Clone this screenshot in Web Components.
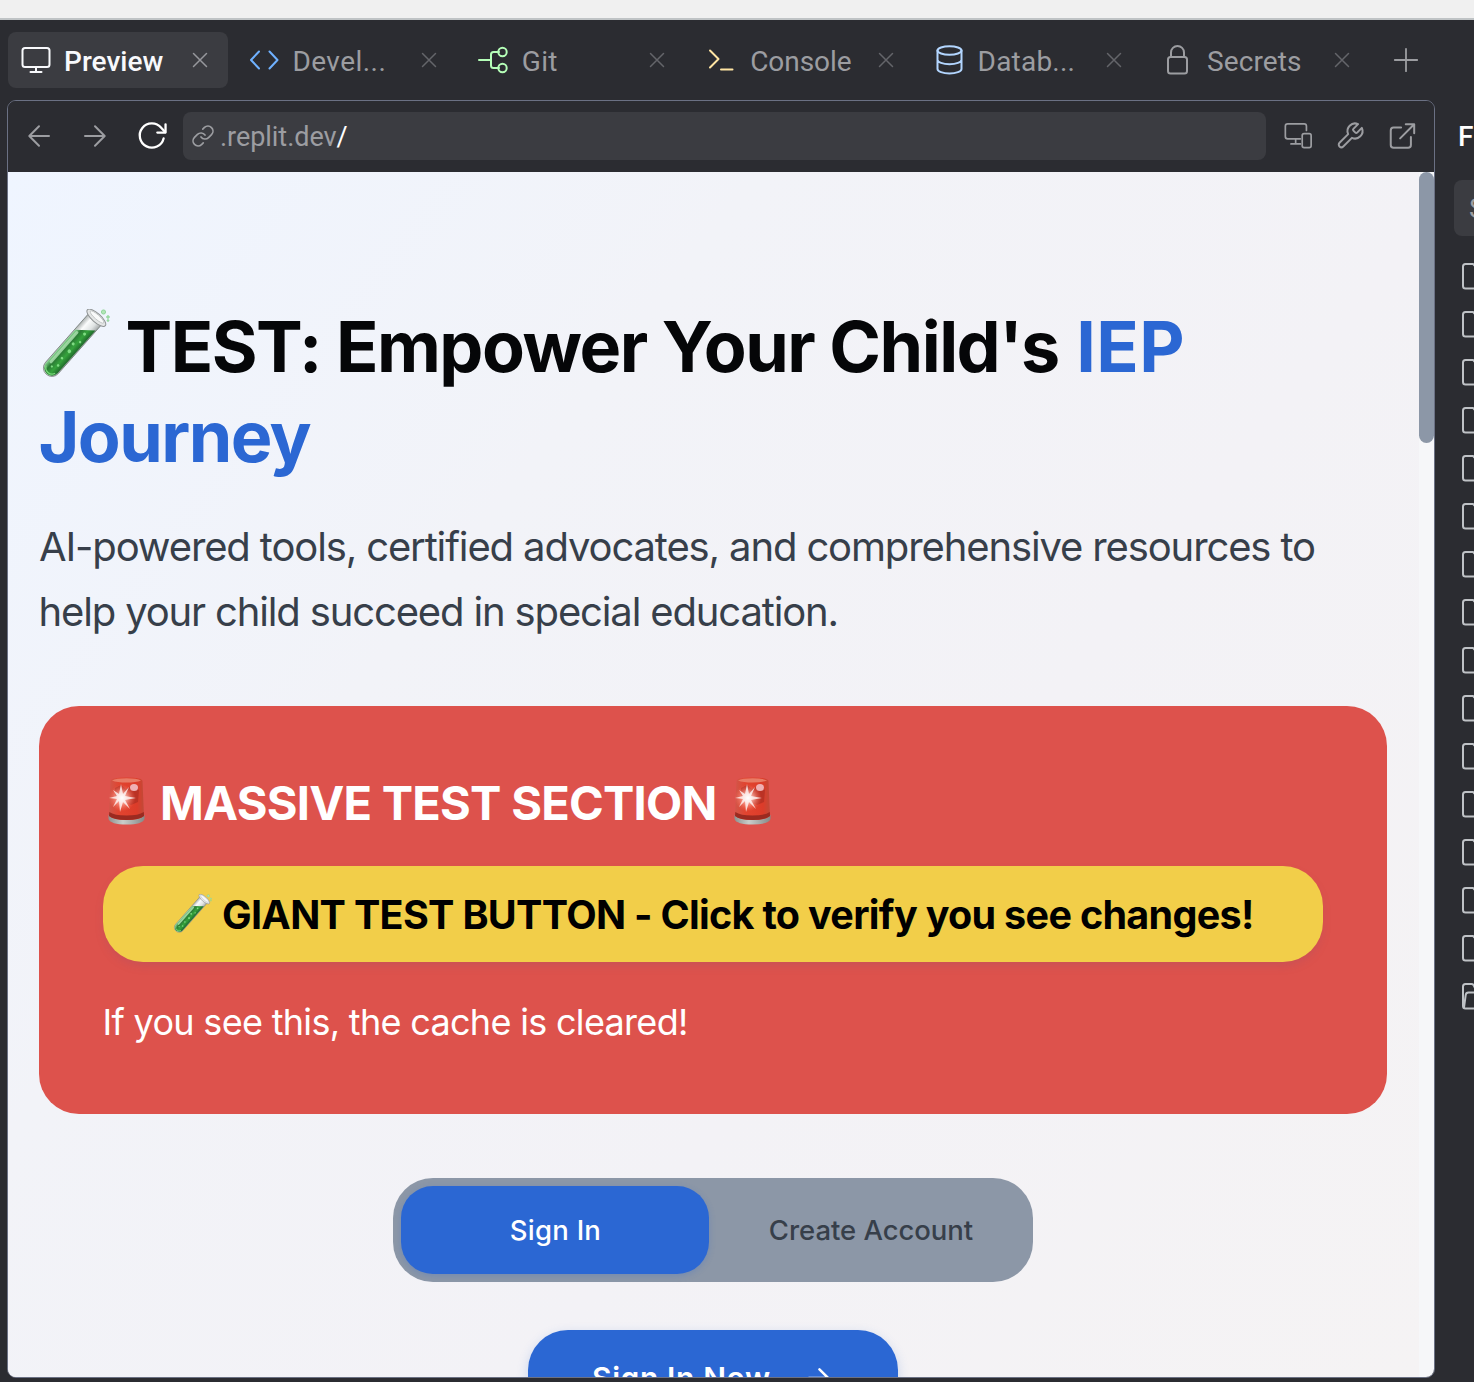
<!DOCTYPE html>
<html lang="en">
<head>
<meta charset="utf-8">
<title>Preview</title>
<style>
html,body{margin:0;width:1474px;height:1382px;overflow:hidden;background:#2b2c31;font-family:Inter,"Liberation Sans",sans-serif}
</style>
</head>
<body>
<ide-window></ide-window>
<script>
const define = (name, html, setup) => {
  const t = document.createElement('template');
  t.innerHTML = html;
  customElements.define(name, class extends HTMLElement {
    connectedCallback() {
      if (this.shadowRoot) return;
      this.attachShadow({ mode: 'open' }).append(t.content.cloneNode(true));
      if (setup) setup(this, this.shadowRoot);
    }
  });
};

/* Tracks its text so that the visible glyphs span the "w" attribute in pixels. */
define('fit-text', `<style>:host{display:inline-block;white-space:pre}</style><slot></slot>`, host => {
  const ctx = document.createElement('canvas').getContext('2d');
  const cs = getComputedStyle(host);
  ctx.font = `${cs.fontWeight} ${cs.fontSize} ${cs.fontFamily}`;
  const text = host.textContent, m = ctx.measureText(text);
  const ink = m.actualBoundingBoxLeft + m.actualBoundingBoxRight;
  const gap = (+host.getAttribute('w') - ink) / Math.max(1, text.length - 1);
  host.style.letterSpacing = gap.toFixed(3) + 'px';
  host.style.marginLeft = m.actualBoundingBoxLeft.toFixed(2) + 'px';
});

const ICONS = {
  monitor: ['0 0 32 32', '<rect x="2.500" y="4" width="27" height="19" rx="2.500"/><path d="M16 23.500v4M10.500 28h11"/>'],
  code: ['0 0 32 32', '<path d="M11 7.500L3 16l8 8.500M21.500 7.500l8 8.500-8 8.500"/>'],
  git: ['0 0 32 32', '<path d="M2 16H14M22 8h-5.500Q14 8 14 10.500v11Q14 24 16.500 24H22"/><circle cx="25.500" cy="8" r="4.200"/><circle cx="25.500" cy="24" r="4.200"/>'],
  console: ['0 0 32 32', '<path d="M5 6.500l8.500 8.500L5 23.500M16 25.500h11.500"/>'],
  database: ['0 0 32 32', '<ellipse cx="15.500" cy="6.500" rx="12" ry="4.200"/><path d="M3.500 6.500v18.500c0 2.500 5.400 4.500 12 4.500s12-2 12-4.500V6.500M3.500 15.700c0 2.500 5.400 4.500 12 4.500s12-2 12-4.500"/>'],
  lock: ['0 0 32 32', '<rect x="6" y="13" width="19" height="16.500" rx="2.500"/><path d="M9 13V8.500a6.500 6.500 0 0 1 13 0V13"/>'],
  close: ['0 0 16 16', '<path d="M1.500 1.500l13 13M14.500 1.500l-13 13"/>'],
  plus: ['0 0 24 24', '<path d="M12 .8v22.400M.8 12h22.400"/>'],
  back: ['0 0 24 24', '<path d="M22 12H2.500M12 2.300L2.300 12l9.700 9.700"/>'],
  forward: ['0 0 24 24', '<path d="M2 12h19.500M12 2.300l9.700 9.700-9.700 9.700"/>'],
  reload: ['0 0 32 32', '<path d="M28.500 19A12.500 12.500 0 1 1 26 8l4 4.500"/><path d="M30.500 4.500v8.500H22"/>'],
  link: ['0 0 24 24', '<path d="M10 13a5 5 0 0 0 7.540.54l3-3a5 5 0 0 0-7.070-7.070l-1.720 1.710"/><path d="M14 11a5 5 0 0 0-7.540-.54l-3 3a5 5 0 0 0 7.070 7.070l1.710-1.710"/>'],
  devices: ['0 0 32 32', '<path d="M25 10V5.500Q25 3 22.500 3H5Q2.500 3 2.500 5.500v11Q2.500 19 5 19h13.500M13.500 19v5M8.500 24.500h10"/><rect x="20.500" y="13.500" width="9.500" height="15" rx="2"/>'],
  wrench: ['0 0 24 24', '<path d="M14.700 6.300a1 1 0 0 0 0 1.400l1.600 1.600a1 1 0 0 0 1.400 0l3.770-3.770a6 6 0 0 1-7.940 7.940l-6.910 6.910a2.120 2.120 0 0 1-3-3l6.910-6.910a6 6 0 0 1 7.940-7.940l-3.760 3.760z"/>'],
  external: ['0 0 32 32', '<path d="M15 7H7Q4 7 4 10v15.500q0 3 3 3h15.500q3 0 3-3V17M20 3.500h9V13M29 3.500L14 18.500"/>'],
  file: ['0 0 32 32', '<path d="M17 4H9.500Q7 4 7 6.500v19.500Q7 28.500 9.500 28.500h15Q27 28.500 27 26V14z"/>'],
  folder: ['0 0 32 32', '<path d="M29 12V10H20l-2.500-5Q17 4 15.500 4H9.500Q7 4 7 6.500v19.500Q7 28.500 9.500 28.500H27l4-16H12.500Q10 12.500 9.700 15L8 27.500"/>'],
  arrow: ['0 0 24 24', '<path d="M1 12h21M12.500 2.500L22 12l-9.500 9.500"/>']
};
define('ui-icon', `<style>:host{display:inline-flex;flex:none}svg{display:block;width:100%;height:100%;fill:none;stroke:currentColor;stroke-linecap:round;stroke-linejoin:round;overflow:visible}</style><svg></svg>`, (host, root) => {
  const [box, body] = ICONS[host.getAttribute('name')];
  const size = +host.getAttribute('size');
  const svg = root.querySelector('svg');
  host.style.width = host.style.height = size + 'px';
  svg.setAttribute('viewBox', box);
  svg.setAttribute('stroke-width', (+host.getAttribute('sw') || 2) * +box.split(' ')[2] / size);
  svg.innerHTML = body;
});

define('test-tube', `<style>:host{display:inline-block;flex:none}svg{display:block;width:100%;height:100%}</style>
<svg viewBox="2 1 69 72">
<defs><linearGradient id="g" x1="0" x2="1"><stop offset="0" stop-color="#8bd894"/><stop offset=".3" stop-color="#2b7a35"/><stop offset=".65" stop-color="#35a33c"/><stop offset="1" stop-color="#1f6a2b"/></linearGradient>
<linearGradient id="w" x1="0" x2="1"><stop offset="0" stop-color="#aeb3b2"/><stop offset=".3" stop-color="#fbfcfc"/><stop offset=".7" stop-color="#dfe3e3"/><stop offset="1" stop-color="#a5a9aa"/></linearGradient></defs>
<g transform="translate(58 9) rotate(41.500)">
<path d="M-8.500 2V68a8.500 8.500 0 0 0 17 0V2z" fill="url(#w)" stroke="#777e7b" stroke-width=".8"/>
<path d="M-7.800 24L7.800 11V68a7.800 7.800 0 0 1-15.600 0z" fill="url(#g)"/>
<path d="M-4.700 25V64" stroke="#b9ecbb" stroke-width="3" stroke-linecap="round" opacity=".7"/>
<path d="M-6 70a6.500 6.500 0 0 0 12 0" stroke="#78d67a" stroke-width="1.400" fill="none"/>
<ellipse cx="0" cy="1" rx="12" ry="4.400" fill="#e4e6e6" stroke="#8f9394" stroke-width="1"/>
<ellipse cx="0" cy="0" rx="9" ry="2.300" fill="#f9fafa" stroke="#b4b8b8" stroke-width=".7"/>
<g fill="#7edb82"><circle cx="2" cy="21" r="1.500"/><circle cx="4" cy="30" r="1.200"/><circle cx="0" cy="36" r="1.500"/><circle cx="2" cy="44" r="1.800"/><circle cx="1" cy="54" r="1.300"/><circle cx="3" cy="62" r="1.300"/><circle cx="-1" cy="67" r="1.100"/></g>
</g>
<g fill="#b2e6b7" stroke="#83cf8c" stroke-width=".8"><circle cx="64.500" cy="4" r="2.100"/><circle cx="69" cy="9" r="1.300"/><circle cx="69" cy="12.500" r=".9"/></g>
</svg>`);

define('siren-light', `<style>:host{display:inline-block;flex:none;width:37px;height:48px}svg{display:block}</style>
<svg width="37" height="48" viewBox="0 0 37 48">
<defs><linearGradient id="r" x1="0" x2="1"><stop offset="0" stop-color="#d0564a"/><stop offset=".3" stop-color="#e2442f"/><stop offset=".8" stop-color="#dc3c2a"/><stop offset="1" stop-color="#c04a38"/></linearGradient>
<linearGradient id="b" x1="0" x2="1"><stop offset="0" stop-color="#8d9290"/><stop offset=".4" stop-color="#c9cdca"/><stop offset="1" stop-color="#858a88"/></linearGradient>
<radialGradient id="h"><stop offset="0" stop-color="#fff"/><stop offset=".3" stop-color="#ffc5bb" stop-opacity=".85"/><stop offset="1" stop-color="#ff6a55" stop-opacity="0"/></radialGradient></defs>
<path d="M.5 38v4q2 5.500 18 5.500T36.500 42v-4z" fill="url(#b)"/>
<path d="M2.500 4Q3 .5 18.500.5T34.500 4L36 39q-4 4-17.500 4T1 39z" fill="url(#r)"/>
<path d="M1.300 35q5 3.500 17.200 3.500T35.800 35l.2 4Q31 43 18.500 43T1 39z" fill="#9b2a20"/>
<path d="M4 3.500Q8 1.200 18.500 1.200T33 3.500Q28 5.500 18.500 5.500T4 3.500z" fill="#e77c66"/>
<path d="M7 11l6-3 5 4 7-3 6 4-1 12-7 3-9-4-7-4z" fill="#a92c22" opacity=".65"/>
<ellipse cx="26" cy="10.500" rx="4" ry="3.600" fill="#efb0b3"/>
<circle cx="14" cy="21" r="13.500" fill="url(#h)"/>
<path d="M13 7l2 10 6-7-4 9 11 2-11 2 5 9-7-7-3 10-1-11-6 6 4-8-8-1 8-2-4-6 6 4z" fill="#fff" opacity=".75"/>
</svg>`);

define('pane-tab', `<style>
:host{display:flex;align-items:center;box-sizing:border-box;width:220.400px;height:56px;border-radius:8px;padding:0 20px 0 12px;color:#9c9da1;font:400 28px/56px Roboto,sans-serif}
:host([active]){background:#3b3c41;color:#f8f9fc;font-weight:500}
.label{flex:1;padding:2px 0 0 14px;height:56px;box-sizing:border-box;white-space:pre}
.x{display:flex;color:#64656a}
:host([active]) .x{color:#96979c}
.i{display:flex}
</style><span class="i"></span><span class="label"><slot></slot></span><span class="x"><ui-icon name="close" size="16" sw="1.500"></ui-icon></span>`, (host, root) => {
  const i = root.querySelector('.i');
  i.style.color = host.getAttribute('tint');
  i.innerHTML = `<ui-icon name="${host.getAttribute('icon')}" size="32" sw="2"></ui-icon>`;
});

define('tab-strip', `<style>:host{display:flex;gap:8px;padding:12px 0 0 8px;height:68px;align-items:center;box-sizing:border-box}.add{color:#9c9da1;display:flex;padding-left:16px}</style>
<pane-tab active icon="monitor" tint="#f8f9fc"><fit-text w="97.500">Preview</fit-text></pane-tab>
<pane-tab icon="code" tint="#6fb1ff"><fit-text w="90">Devel...</fit-text></pane-tab>
<pane-tab icon="git" tint="#b5ffb8"><fit-text w="34.500">Git</fit-text></pane-tab>
<pane-tab icon="console" tint="#ffe5a3"><fit-text w="99.500">Console</fit-text></pane-tab>
<pane-tab icon="database" tint="#b3d6ff"><fit-text w="94">Datab...</fit-text></pane-tab>
<pane-tab icon="lock" tint="#9c9da1"><fit-text w="93">Secrets</fit-text></pane-tab>
<span class="add"><ui-icon name="plus" size="24" sw="1.800"></ui-icon></span>`);

define('address-bar', `<style>
:host{display:flex;align-items:center;height:71px;color:#9c9da1;padding:0 0 2px 19px;box-sizing:border-box;background:#2b2c31}
.nav{display:flex;align-items:center;width:156px;flex:none}
.fwd{margin-left:32px}.re{margin-left:29px;color:#fff}
.url{display:flex;align-items:center;box-sizing:border-box;width:1083px;height:48px;border-radius:8px;background:#3b3c41;padding-left:8px;font:400 27px/48px Roboto,sans-serif}
.url fit-text{padding:2px 0 0 6px}.slash{color:#fff;padding-top:2px}
.tools{display:flex;align-items:center;padding-left:17px;gap:22px}
</style>
<div class="nav"><ui-icon name="back" size="24" sw="2"></ui-icon><ui-icon class="fwd" name="forward" size="24" sw="2"></ui-icon><ui-icon class="re" name="reload" size="31" sw="2.300"></ui-icon></div>
<div class="url"><ui-icon name="link" size="24" sw="1.700"></ui-icon><fit-text w="115.500">.replit.dev</fit-text><span class="slash">/</span></div>
<div class="tools"><ui-icon name="devices" size="30" sw="1.700"></ui-icon><ui-icon name="wrench" size="30" sw="2"></ui-icon><ui-icon name="external" size="30" sw="2"></ui-icon></div>`);

define('hero-title', `<style>:host{display:block;color:#050608;font:700 70px/90px Inter,sans-serif}div{display:flex;height:90px}test-tube{width:69px;height:72px;margin:7px 0 0 2px}.blue{color:#2b67d3}</style>
<div><test-tube></test-tube><fit-text w="930" style="padding-left:17.500px">TEST: Empower Your Child's</fit-text><fit-text class="blue" w="102" style="padding-left:21.500px">IEP</fit-text></div>
<div class="blue"><fit-text w="271" style="padding-left:1.500px">Journey</fit-text></div>`);

define('test-section', `<style>
:host{display:block;box-sizing:border-box;height:408px;border-radius:40px;background:#dd524c;padding:64px;color:#fff}
.head{display:flex;align-items:center;height:64px;padding-left:5px;font:700 47px/64px Inter,sans-serif}
.head siren-light{margin-top:-2px}
.head fit-text,.big fit-text{padding-top:2px}
.big{display:flex;align-items:center;box-sizing:border-box;margin-top:32px;height:96px;border-radius:40px;background:#f2ce49;color:#000;padding-left:70px;font:700 39.500px/94px Inter,sans-serif;box-shadow:0 5px 12px -4px rgba(120,80,130,.28)}
.big test-tube{width:39px;height:41px}
.note{margin-top:32px;font:440 36px/56px Inter,sans-serif}
</style>
<div class="head"><siren-light></siren-light><fit-text w="551.500" style="padding-left:18px">MASSIVE TEST SECTION</fit-text><siren-light style="margin-left:17px"></siren-light></div>
<div class="big"><test-tube></test-tube><fit-text w="1029" style="padding-left:11px">GIANT TEST BUTTON - Click to verify you see changes!</fit-text></div>
<div class="note"><fit-text w="580.500" style="padding-left:2.500px">If you see this, the cache is cleared!</fit-text></div>`);

define('auth-switch', `<style>
:host{display:flex;box-sizing:border-box;width:640px;height:104px;padding:8px;gap:8px;border-radius:40px;background:#8c97a7;font:500 27.500px/89px Inter,sans-serif}
div{flex:1;text-align:center;border-radius:32px;color:#373f4a}
.on{background:#2b67d3;color:#fff;box-shadow:0 2px 6px rgba(43,103,211,.25)}
</style><div class="on"><fit-text w="88.500" style="padding-left:2px">Sign In</fit-text></div><div><fit-text w="203" style="padding-left:1px">Create Account</fit-text></div>`);

define('cta-button', `<style>:host{display:flex;align-items:center;box-sizing:border-box;width:370px;height:96px;padding-left:65px;border-radius:40px;background:#2b67d3;color:#fff;font:600 30px/96px Inter,sans-serif;box-shadow:0 4px 12px rgba(43,103,211,.22)}ui-icon{margin-left:37px}</style><fit-text w="177">Sign In Now</fit-text><ui-icon name="arrow" size="22" sw="2.500"></ui-icon>`);

define('web-view', `<style>
:host{display:flex;height:1205px;overflow:hidden;background:#f6f7f9}
main{box-sizing:border-box;width:1411px;height:1205px;overflow:hidden;padding:130px 32px 0 31px;background:linear-gradient(128deg,#eff5ff 0%,#f2f3f8 32%,#f3f2f6 62%,#f5f3f4 100%);display:flex;flex-direction:column;flex:none}
p{margin:32px 0 62px;font:440 40px/65px Inter,sans-serif;color:#373f4a;height:130px}
p span{display:block;height:65px}
auth-switch{margin:64px auto 48px;flex:none}
cta-button{margin:0 auto;flex:none}
.thumb{width:15px;height:271px;border-radius:8px;background:#8c97a7}
</style>
<main><hero-title></hero-title>
<p><span><fit-text w="1274" style="padding-left:1px">AI-powered tools, certified advocates, and comprehensive resources to</fit-text></span><span><fit-text w="795" style="padding-left:2.500px">help your child succeed in special education.</fit-text></span></p>
<test-section></test-section><auth-switch></auth-switch><cta-button></cta-button></main><div class="thumb"></div>`);

define('file-panel', `<style>
:host{display:block;width:39px;overflow:hidden;color:#bfc2c6;white-space:nowrap}
.title{height:72px;padding-left:23px;color:#fff;font:500 28px/74px Roboto,sans-serif}
.search{margin:8px 0 0 19px;width:200px;height:56px;border-radius:8px;background:#3b3c41;padding-left:15px;box-sizing:border-box;color:#9c9da1;font:400 28px/58px Roboto,sans-serif}
.list{padding:16px 0 0 21px}
.row{height:48px;display:flex;align-items:center}
</style><div class="title">F</div><div class="search">S</div><div class="list"></div>`, (h, root) => {
  root.querySelector('.list').innerHTML = Array.from({ length: 16 }, (_, i) => `<div class="row"><ui-icon name="${i < 15 ? 'file' : 'folder'}" size="32" sw="2"></ui-icon></div>`).join('');
});

define('ide-window', `<style>
:host{display:block;width:1474px;height:1382px;overflow:hidden;background:#2b2c31}
.chrome{height:18px;background:#f0f0f0;border-bottom:2px solid #bfc3c5}
.body{display:flex;padding-left:7px;padding-top:12px}
.frame{width:1428px;height:1278px;box-sizing:border-box;border:1px solid #6b7184;border-radius:9px;overflow:hidden;flex:none}
</style><div class="chrome"></div><tab-strip></tab-strip><div class="body"><div class="frame"><address-bar></address-bar><web-view></web-view></div><file-panel></file-panel></div>`);
</script>
</body>
</html>
